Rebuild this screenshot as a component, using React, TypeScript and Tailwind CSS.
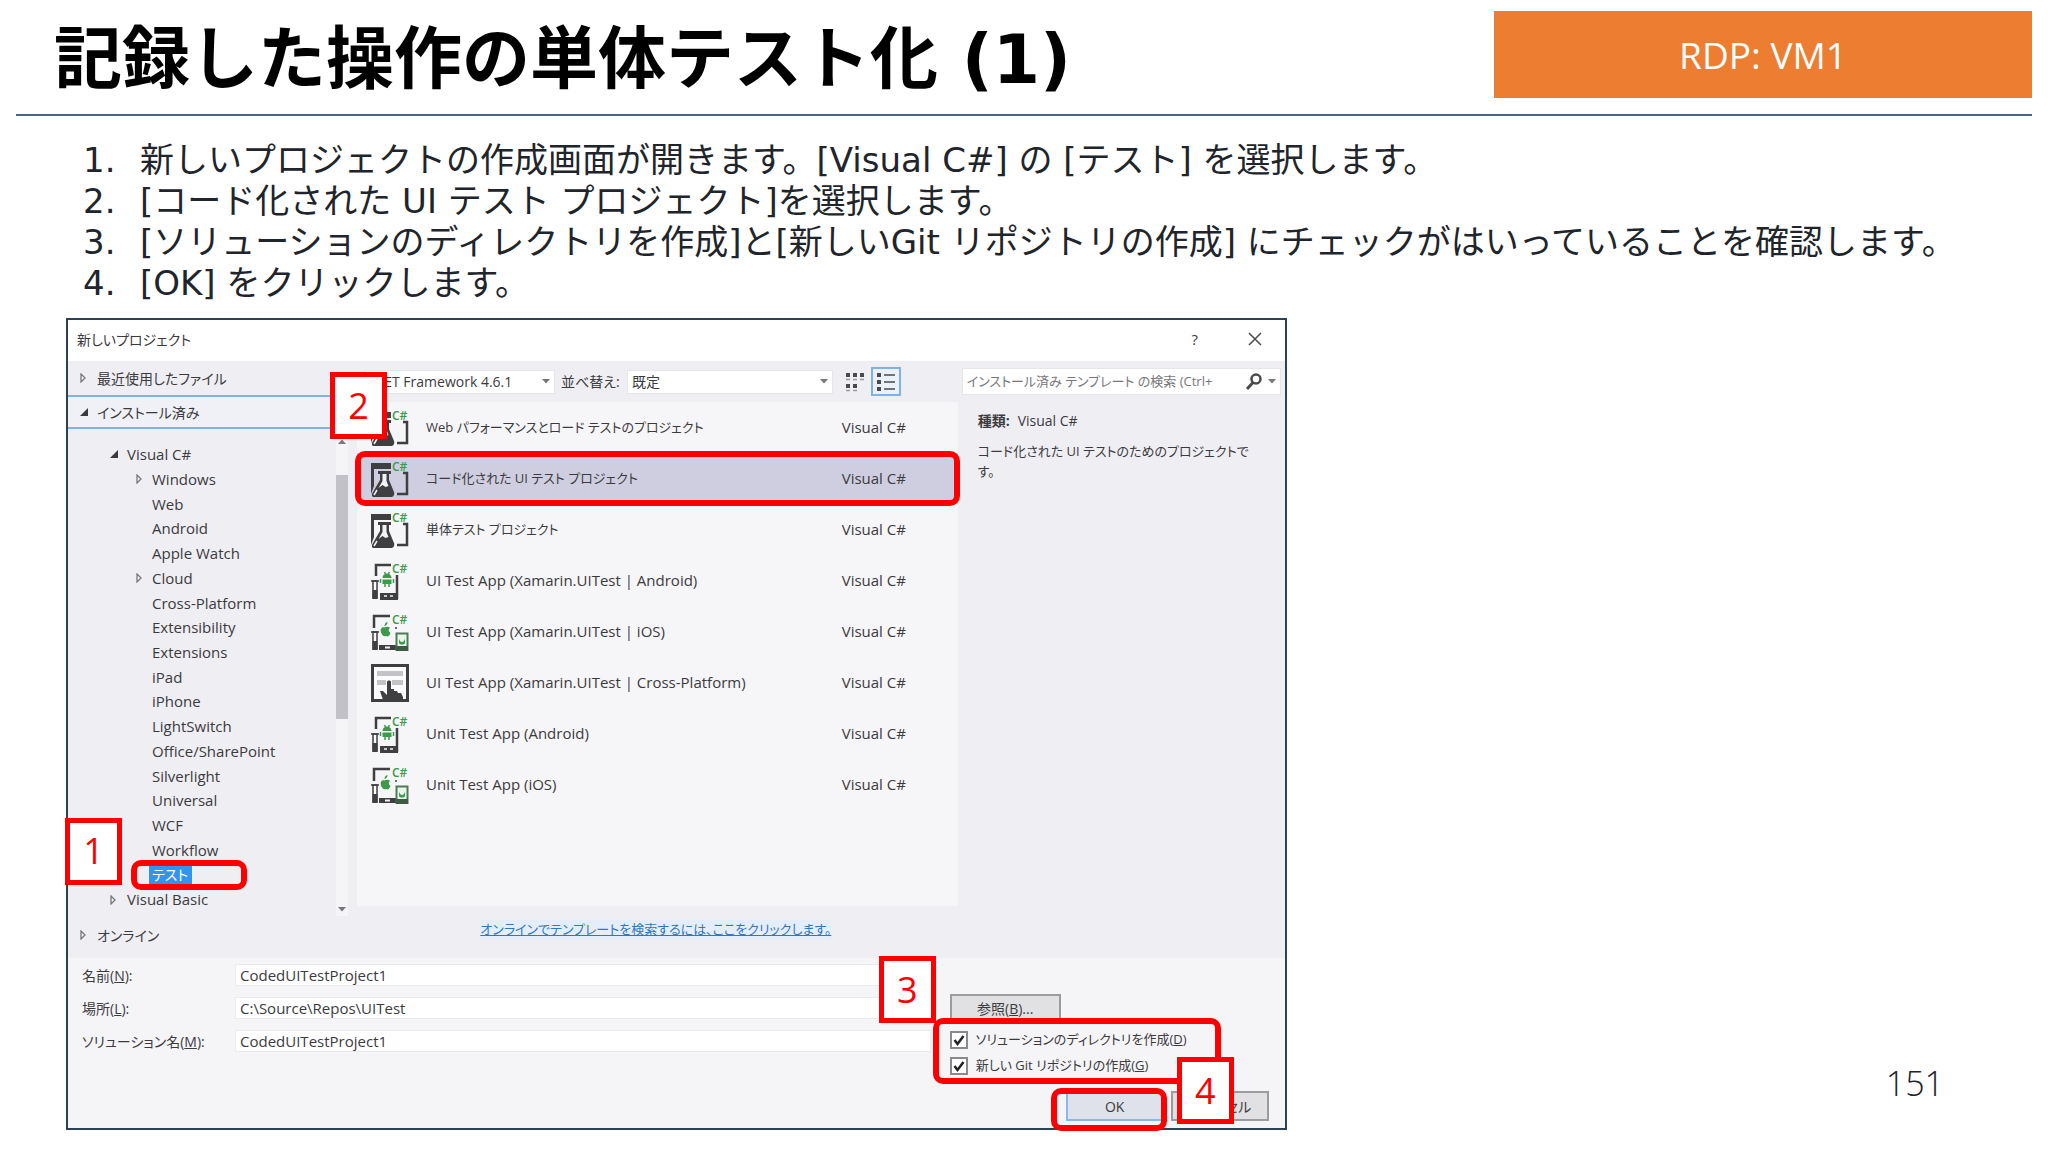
import React from "react";

type IconKind = "flask" | "android" | "ios" | "cross";

const DARK = "#3f3f42";
const GREEN = "#3c9a4a";

function CSharpMark() {
  return (
    <text x="21" y="11" fontSize="12" fontWeight="600" fontFamily="Open Sans, sans-serif" fill={GREEN}>
      C#
    </text>
  );
}

function TemplateIcon({ kind }: { kind: IconKind }) {
  return (
    <svg viewBox="0 0 38 38" className="size-[38px] shrink-0 overflow-visible" aria-hidden="true">
      {kind === "flask" && (
        <>
          <path d="M0 3h20v6H0z" fill={DARK} />
          <path d="M0 9h3v17l-3 8z" fill={DARK} />
          <path d="M7 11h13v3h-2v6l5 12c1 3-1 5-3 5H3c-2 0-3-2-1-5l7-12v-6H7z" fill={DARK} />
          <path d="M11.500 14h4v7l2 5-3 1-3-2-4 3 4-7z" fill="#f3f2f6" />
          <path d="M6 30l-3 5" stroke="#f3f2f6" strokeWidth="1.500" />
          <path d="M32 13h4v21H26" fill="none" stroke={DARK} strokeWidth="2.500" />
          <CSharpMark />
        </>
      )}
      {kind === "android" && (
        <>
          <path d="M5 14V3h15" fill="none" stroke={DARK} strokeWidth="2.500" />
          <path d="M26 13v24" stroke={DARK} strokeWidth="2.500" />
          <path d="M9 31h18v7H9z" fill={DARK} />
          <path d="M13 34h3M19 34h3" stroke="#f3f2f6" strokeWidth="1.500" />
          <path d="M2 19h4v17H2z" fill="#fff" stroke={DARK} strokeWidth="1.500" />
          <path d="M1.500 28h5v9h-5z" fill={DARK} />
          <path d="M0 19h8" stroke={DARK} strokeWidth="1.500" />
          <path d="M11.500 16a4.500 4.500 0 0 1 9 0zM11.500 17.500h9V22h-9z" fill={GREEN} />
          <path d="M9.500 17v4M22.500 17v4M14 22v3M18 22v3M13.500 10l1 2M18.500 10l-1 2" stroke={GREEN} strokeWidth="1.500" />
          <CSharpMark />
        </>
      )}
      {kind === "ios" && (
        <>
          <path d="M3 15V3h16" fill="none" stroke={DARK} strokeWidth="2.500" />
          <path d="M8 32h18v5H8z" fill={DARK} />
          <path d="M14 34.500h5" stroke="#f3f2f6" strokeWidth="2" />
          <path d="M2 19h4v17H2z" fill="#fff" stroke={DARK} strokeWidth="1.500" />
          <path d="M1.500 28h5v9h-5z" fill={DARK} />
          <path d="M0 19h8" stroke={DARK} strokeWidth="1.500" />
          <path
            d="M13.500 14.500c1.500-1 3.500-1 5.500 0-2 2-1.500 4 .5 5.500-1 3-3 4-4.500 3-2 1-4-.5-5-3.500s.5-6 3.500-5zM13.500 13c0-2 1-3.500 3-4 0 2-1 3.500-3 4z"
            fill={GREEN}
          />
          <path d="M25.500 20.500h11V37h-11z" fill="#e9f6ea" stroke="#4f7a58" strokeWidth="2" />
          <path d="M25 33h12v5H25z" fill="#3f5a45" />
          <path d="M28 26c1 1 1 3 3 3s2-2 3-3v4c-1 2-5 2-6 0z" fill={GREEN} />
          <path d="M25 14v2" stroke={DARK} strokeWidth="1.500" />
          <CSharpMark />
        </>
      )}
      {kind === "cross" && (
        <>
          <path d="M1.500 1.500h35v35h-35z" fill="#fbfbfc" stroke={DARK} strokeWidth="3" />
          <path d="M6 7h26v5H6zM6 16h9v5H6zM21 16h11v5H21z" fill="#c4c4c8" />
          <path d="M12 36l-3-9 3 0 4 4V18c0-2 4-2 4 0v7h3l0 2h3l1 2h3l2 4v3z" fill={DARK} />
        </>
      )}
    </svg>
  );
}

const templates: { name: string; icon: IconKind; selected?: boolean; japanese?: boolean }[] = [
  { name: "Web パフォーマンスとロード テストのプロジェクト", icon: "flask", japanese: true },
  { name: "コード化された UI テスト プロジェクト", icon: "flask", selected: true, japanese: true },
  { name: "単体テスト プロジェクト", icon: "flask", japanese: true },
  { name: "UI Test App (Xamarin.UITest | Android)", icon: "android" },
  { name: "UI Test App (Xamarin.UITest | iOS)", icon: "ios" },
  { name: "UI Test App (Xamarin.UITest | Cross-Platform)", icon: "cross" },
  { name: "Unit Test App (Android)", icon: "android" },
  { name: "Unit Test App (iOS)", icon: "ios" },
];

const treeItems: { name: string; level: 1 | 2; arrow?: "open" | "closed"; selected?: boolean }[] = [
  { name: "Visual C#", level: 1, arrow: "open" },
  { name: "Windows", level: 2, arrow: "closed" },
  { name: "Web", level: 2 },
  { name: "Android", level: 2 },
  { name: "Apple Watch", level: 2 },
  { name: "Cloud", level: 2, arrow: "closed" },
  { name: "Cross-Platform", level: 2 },
  { name: "Extensibility", level: 2 },
  { name: "Extensions", level: 2 },
  { name: "iPad", level: 2 },
  { name: "iPhone", level: 2 },
  { name: "LightSwitch", level: 2 },
  { name: "Office/SharePoint", level: 2 },
  { name: "Silverlight", level: 2 },
  { name: "Universal", level: 2 },
  { name: "WCF", level: 2 },
  { name: "Workflow", level: 2 },
  { name: "テスト", level: 2, selected: true },
  { name: "Visual Basic", level: 1, arrow: "closed" },
];

const steps = [
  "新しいプロジェクトの作成画面が開きます。[Visual C#] の [テスト] を選択します。",
  "[コード化された UI テスト プロジェクト]を選択します。",
  "[ソリューションのディレクトリを作成]と[新しいGit リポジトリの作成] にチェックがはいっていることを確認します。",
  "[OK] をクリックします。",
];

function Arrow({ state }: { state?: "open" | "closed" }) {
  return (
    <svg viewBox="0 0 10 10" className="size-[10px] shrink-0" aria-hidden="true">
      {state === "open" && <path d="M9 1v8H1z" fill="#3a3a3c" />}
      {state === "closed" && <path d="M2 1l4 4-4 4z" fill="#f4f4f6" stroke="#77777c" strokeWidth="1.300" />}
    </svg>
  );
}

function Badge({ n, className }: { n: number; className: string }) {
  return (
    <span
      className={
        "absolute z-20 flex h-[67px] w-[57px] items-center justify-center border-[5px] border-[#ff0000] bg-white font-['Open_Sans',sans-serif] text-[36px] leading-none text-[#ff0000] " +
        className
      }
    >
      {n}
    </span>
  );
}

function Highlight({ className }: { className: string }) {
  return (
    <span
      aria-hidden="true"
      className={"pointer-events-none absolute z-10 rounded-[10px] border-[6px] border-[#ff0000] " + className}
    />
  );
}

function Caret() {
  return (
    <svg viewBox="0 0 8 5" className="h-[5px] w-2 shrink-0" aria-hidden="true">
      <path d="M0 0h8L4 4.500z" fill="#77777c" />
    </svg>
  );
}

function Dropdown({ label, value, className }: { label: string; value: string; className: string }) {
  return (
    <span className={"flex h-6 items-center border border-[#e6e6ea] bg-white pr-1 " + className}>
      <select aria-label={label} className="min-w-0 flex-1 appearance-none bg-transparent pl-1 outline-none">
        <option>{value}</option>
      </select>
      <Caret />
    </span>
  );
}

function CheckRow({ id, text, accel }: { id: string; text: string; accel: string }) {
  return (
    <div className="flex h-[26px] items-center gap-2">
      <span className="relative size-[18px]">
        <input
          id={id}
          type="checkbox"
          defaultChecked
          className="peer size-[18px] appearance-none border-2 border-[#8a8a8e] bg-white"
        />
        <svg viewBox="0 0 18 18" className="pointer-events-none absolute inset-0 hidden peer-checked:block" aria-hidden="true">
          <path d="M4.500 9l3 4 6-8" fill="none" stroke="#222" strokeWidth="2.500" />
        </svg>
      </span>
      <label htmlFor={id} className="text-[13px] whitespace-nowrap">
        {text}(<u>{accel}</u>)
      </label>
    </div>
  );
}

function Field({ id, text, accel, value }: { id: string; text: string; accel: string; value: string }) {
  return (
    <>
      <label htmlFor={id}>
        {text}(<u>{accel}</u>):
      </label>
      <input
        id={id}
        defaultValue={value}
        className="h-[22px] min-w-0 border border-[#ebebef] bg-white pl-1 text-[15px] outline-none"
      />
    </>
  );
}

function Sidebar() {
  return (
    <nav aria-label="カテゴリ" className="flex w-[286px] shrink-0 flex-col">
      <button className="flex h-[34px] items-center gap-2 pl-[11px] text-left">
        <Arrow state="closed" />
        最近使用したファイル
      </button>
      <button className="flex h-[34px] items-center gap-2 border-2 border-r-0 border-l-0 border-[#7fb2e5] bg-[#f0f1f6] pl-[11px] text-left">
        <Arrow state="open" />
        インストール済み
      </button>
      <div className="flex h-[487px]">
        <ul className="grid flex-1 auto-rows-fr pt-[13px] pb-1 text-[15px]">
          {treeItems.map((item) => (
            <li key={item.name} className="relative flex items-center">
              <button className={"flex items-center text-left " + (item.level === 1 ? "gap-2 pl-[41px]" : "gap-1 pl-[67px]")}>
                <Arrow state={item.arrow} />
                <span
                  className={
                    item.selected ? "bg-[#3393f0] pr-1 pl-[3px] text-[14px] leading-5 text-white" : item.level === 2 ? "pl-[3px]" : ""
                  }
                >
                  {item.name}
                </span>
              </button>
              {item.selected && (
                <>
                  <Highlight className="-top-[3px] left-[63px] h-[30px] w-[116px] rounded-[7px]" />
                  <Badge n={1} className="-top-[45px] -left-[3px]" />
                </>
              )}
            </li>
          ))}
        </ul>
        <div className="mr-[6px] flex w-3 flex-col items-center bg-[#f5f4f7] pt-[10px] pb-1" aria-hidden="true">
          <span className="rotate-180"><Caret /></span>
          <span className="mt-[31px] h-[244px] w-3 bg-[#c2c1c7]" />
          <span className="mt-auto"><Caret /></span>
        </div>
      </div>
      <button className="flex h-[42px] items-center gap-2 pb-1 pl-[11px] text-left">
        <Arrow state="closed" />
        オンライン
      </button>
    </nav>
  );
}

function TemplatePane() {
  return (
    <section className="relative flex min-w-0 flex-1 flex-col">
      <Badge n={2} className="top-[11px] -left-6" />
      <div className="flex h-[41px] items-center pl-[11px]">
        <Dropdown label="フレームワーク" value=".NET Framework 4.6.1" className="w-[190px]" />
        <span className="w-[72px] pl-[6px] whitespace-nowrap">並べ替え:</span>
        <Dropdown label="並べ替え" value="既定" className="w-[206px]" />
        <button aria-label="小さいアイコン" className="ml-[6px] flex h-7 w-8 items-center justify-center">
          <svg viewBox="0 0 20 20" className="size-5">
            <path d="M1 1h4v4H1zM8 1h4v4H8zM15 1h4v4h-4zM1 12h4v4H1zM8 12h4v4H8z" fill="#4a4a4d" />
            <path d="M1 7.500h4M8 7.500h4M15 7.500h4M1 18.500h4M8 18.500h4" stroke="#9a9a9e" strokeWidth="1.500" />
          </svg>
        </button>
        <button aria-label="一覧" className="flex h-[29px] w-[30px] items-center justify-center border-2 border-[#7fb2e5] bg-[#eaf1fb]">
          <svg viewBox="0 0 20 20" className="size-5">
            <path d="M1 1h4v4H1zM1 8h4v4H1zM1 15h4v4H1z" fill="#4a4a4d" />
            <path d="M8 3h11M8 10h11M8 17h11" stroke="#4a4a4d" strokeWidth="1.500" />
          </svg>
        </button>
      </div>
      <ul className="ml-[3px] flex-1 bg-[#f6f5f8] text-[15px]">
        {templates.map((t) => (
          <li key={t.name} className="relative">
            <button className={"flex h-[51px] w-full items-center pl-[14px] text-left " + (t.selected ? "bg-[#cfcee0]" : "")}>
              <TemplateIcon kind={t.icon} />
              <span className={"min-w-0 flex-1 truncate pl-[17px] " + (t.japanese ? "text-[13px]" : "")}>{t.name}</span>
              <span className="w-[116px]">Visual C#</span>
            </button>
            {t.selected && <Highlight className="inset-x-[-2px] -top-[2px] -bottom-[2px]" />}
          </li>
        ))}
      </ul>
      <p className="flex h-[52px] items-center justify-center pb-1">
        <a href="#online" className="bg-[#e4eefa] text-[13px] text-[#3277bd] underline">
          オンラインでテンプレートを検索するには、ここをクリックします。
        </a>
      </p>
    </section>
  );
}

function DetailPane() {
  return (
    <aside className="w-[327px] shrink-0 pl-1">
      <div className="flex h-[41px] items-center">
        <div className="mr-1 flex h-[27px] flex-1 items-center gap-1 border border-[#e6e6ea] bg-white px-1">
          <input
            type="search"
            aria-label="テンプレートの検索"
            placeholder="インストール済み テンプレート の検索 (Ctrl+"
            className="min-w-0 flex-1 bg-transparent text-[13px] outline-none placeholder:text-[#77777a]"
          />
          <svg viewBox="0 0 20 20" className="size-5 shrink-0" aria-hidden="true">
            <circle cx="12" cy="7" r="4.500" fill="none" stroke="#4a4a4d" strokeWidth="2.500" />
            <path d="M9 10.500L3 17" stroke="#4a4a4d" strokeWidth="3" />
          </svg>
          <Caret />
        </div>
      </div>
      <div className="pt-[9px] pr-[30px] pl-4">
        <p className="leading-5">
          <b>種類:</b>
          <span className="pl-2">Visual C#</span>
        </p>
        <p className="mt-[10px] text-[13px] leading-5 break-all">コード化された UI テストのためのプロジェクトです。</p>
      </div>
    </aside>
  );
}

function ProjectForm() {
  return (
    <form className="flex h-[170px] bg-[#f5f4f7]" onSubmit={(e) => e.preventDefault()}>
      <div className="grid min-w-0 flex-1 grid-cols-[153px_1fr] content-start items-center gap-y-[11px] pt-[6px] pl-[14px]">
        <Field id="name" text="名前" accel="N" value="CodedUITestProject1" />
        <Field id="location" text="場所" accel="L" value="C:\Source\Repos\UITest" />
        <Field id="solution" text="ソリューション名" accel="M" value="CodedUITestProject1" />
      </div>
      <div className="relative ml-[19px] flex w-[335px] shrink-0 flex-col pt-9 pr-4">
        <Badge n={3} className="-top-[2px] -left-[71px]" />
        <button type="button" className="h-7 w-[111px] border-2 border-[#9c9ca0] bg-[#e1e1e3]">
          参照(<u>B</u>)...
        </button>
        <div className="relative mt-[5px] w-[240px]">
          <CheckRow id="makedir" text="ソリューションのディレクトリを作成" accel="D" />
          <CheckRow id="makegit" text="新しい Git リポジトリの作成" accel="G" />
          <Highlight className="-top-[9px] -right-[31px] -bottom-[5px] -left-[17px]" />
        </div>
        <div className="mt-3 flex justify-end gap-[7px]">
          <div className="relative">
            <button type="submit" className="h-[30px] w-[98px] border-2 border-[#8db6e8] bg-[#dfe2ea]">
              OK
            </button>
            <Highlight className="-top-[3px] -right-[3px] -bottom-[10px] -left-[15px]" />
          </div>
          <div className="relative">
            <button type="button" className="h-[30px] w-[98px] border-2 border-[#9c9ca0] bg-[#e1e1e3]">
              キャンセル
            </button>
            <Badge n={4} className="-top-[34px] left-[6px]" />
          </div>
        </div>
      </div>
    </form>
  );
}

export default function App() {
  return (
    <main className="min-h-screen bg-white pt-[11px] font-['DejaVu_Sans','Noto_Sans_CJK_JP',sans-serif] text-[#20242b]" lang="ja">
      <header className="mx-4 flex items-start justify-between border-b-2 border-[#4d6685] pb-[5px]">
        <h1 className="pl-[38px] text-[68px] leading-[98px] font-bold whitespace-nowrap text-black">記録した操作の単体テスト化 (1)</h1>
        <div className="flex h-[87px] w-[538px] items-center justify-center bg-[#ed7d31] font-['Open_Sans',sans-serif] text-[37px] text-white">
          RDP: VM1
        </div>
      </header>

      <ol className="mt-6 pl-[83px] text-[34px] leading-[41px]">
        {steps.map((s, i) => (
          <li key={i} className="flex">
            <span className="w-[57px] shrink-0">{i + 1}.</span>
            <span>{s}</span>
          </li>
        ))}
      </ol>

      <div className="mt-[14px] flex items-end justify-between pr-[104px] pl-[66px]">
        <section
          aria-label="新しいプロジェクト"
          className="w-[65%] border-2 border-[#2c4254] bg-[#efeef3] font-['Open_Sans','Noto_Sans_CJK_JP',sans-serif] text-[14px] text-[#3b3b3e] [font-feature-settings:'palt']"
        >
          <div className="flex h-[41px] items-center bg-white pb-[3px] pl-[9px]">
            <h2 className="flex-1">新しいプロジェクト</h2>
            <button aria-label="ヘルプ" className="w-[60px] text-[15px]">?</button>
            <button aria-label="閉じる" className="flex w-[60px] justify-center">
              <svg viewBox="0 0 14 14" className="size-[14px]">
                <path d="M1 1l12 12M13 1L1 13" stroke="#4a4a4d" strokeWidth="1.500" />
              </svg>
            </button>
          </div>
          <div className="flex">
            <Sidebar />
            <TemplatePane />
            <DetailPane />
          </div>
          <ProjectForm />
        </section>
        <span className="pb-[24px] font-['Open_Sans',sans-serif] text-[34px] leading-[46px] font-light">151</span>
      </div>
    </main>
  );
}
